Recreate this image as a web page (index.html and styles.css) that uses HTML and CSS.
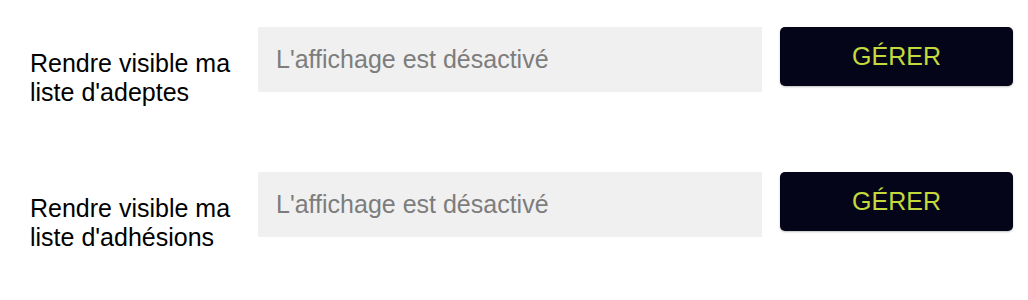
FILE: index.html
```html
<!DOCTYPE html>
<html lang="fr">
<head>
    <meta charset="UTF-8">
    <meta name="viewport" content="width=device-width, initial-scale=1.0">
    <title>Confidentialité</title>
    <link rel="stylesheet" href="styles.css">
</head>
<body>

    <!-- Visibility settings -->
    <div class="settings">
        <div class="setting-row">
            <label class="setting-label" for="followers">Rendre visible ma liste d'adeptes</label>
            <input class="setting-input" type="text" id="followers" placeholder="L'affichage est désactivé" readonly>
            <button class="setting-button" type="button">GÉRER</button>
        </div>

        <div class="setting-row">
            <label class="setting-label" for="memberships">Rendre visible ma liste d'adhésions</label>
            <input class="setting-input" type="text" id="memberships" placeholder="L'affichage est désactivé" readonly>
            <button class="setting-button" type="button">GÉRER</button>
        </div>
    </div>

</body>
</html>
```

FILE: styles.css
```css
/* Reset default margin/padding */
* {
    margin: 0;
    padding: 0;
    box-sizing: border-box;
}

body {
    font-family: "Liberation Sans", Arial, sans-serif;
    background-color: #fff;
    color: #000;
    overflow: hidden;
}

/* Settings list */
.settings {
    padding: 27px 15px 0 30px;
}

.setting-row {
    display: flex;
    align-items: flex-start;
    margin-bottom: 65px;
}

.setting-row:last-child {
    margin-bottom: 0;
}

.setting-label {
    width: 228px;
    flex-shrink: 0;
    padding-top: 22px;
    font-size: 25px;
    line-height: 29px;
}

.setting-input {
    width: 504px;
    height: 65px;
    border: none;
    outline: none;
    background: #f0f0f0;
    padding: 0 18px;
    font-family: inherit;
    font-size: 25px;
    color: #333;
}

.setting-input::placeholder {
    color: #7d7d7d;
    opacity: 1;
}

.setting-button {
    width: 233px;
    height: 59px;
    margin-left: 18px;
    background: #05051a;
    border: none;
    border-radius: 5px;
    box-shadow: 0 1px 2px rgba(0, 0, 0, 0.25);
    color: #c4da3c;
    font-family: inherit;
    font-size: 25px;
    cursor: pointer;
}

.setting-button:hover {
    background: #15152e;
}
```
